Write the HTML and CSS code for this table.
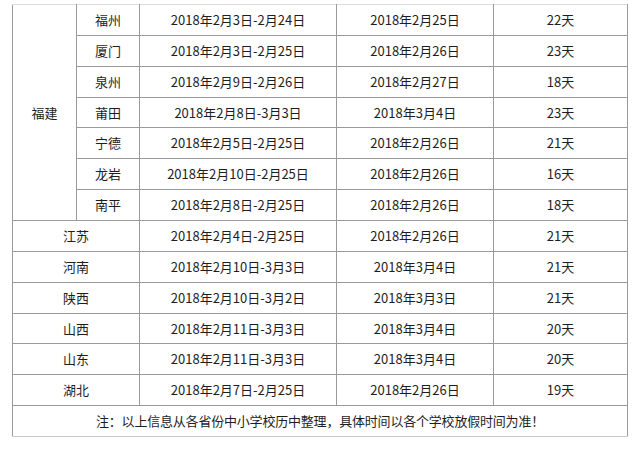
FILE: index.html
```html
<!DOCTYPE html>
<html lang="zh-CN">
<head>
<meta charset="utf-8">
<link rel="stylesheet" href="styles.css">
</head>
<body>
<table class="holiday">
  <colgroup>
    <col class="c-prov"><col class="c-city"><col class="c-range"><col class="c-end"><col class="c-days">
  </colgroup>
  <tbody>
    <tr><td rowspan="7">福建</td><td>福州</td><td>2018年2月3日-2月24日</td><td>2018年2月25日</td><td>22天</td></tr>
    <tr><td>厦门</td><td>2018年2月3日-2月25日</td><td>2018年2月26日</td><td>23天</td></tr>
    <tr><td>泉州</td><td>2018年2月9日-2月26日</td><td>2018年2月27日</td><td>18天</td></tr>
    <tr><td>莆田</td><td>2018年2月8日-3月3日</td><td>2018年3月4日</td><td>23天</td></tr>
    <tr><td>宁德</td><td>2018年2月5日-2月25日</td><td>2018年2月26日</td><td>21天</td></tr>
    <tr><td>龙岩</td><td>2018年2月10日-2月25日</td><td>2018年2月26日</td><td>16天</td></tr>
    <tr><td>南平</td><td>2018年2月8日-2月25日</td><td>2018年2月26日</td><td>18天</td></tr>
    <tr><td colspan="2">江苏</td><td>2018年2月4日-2月25日</td><td>2018年2月26日</td><td>21天</td></tr>
    <tr><td colspan="2">河南</td><td>2018年2月10日-3月3日</td><td>2018年3月4日</td><td>21天</td></tr>
    <tr><td colspan="2">陕西</td><td>2018年2月10日-3月2日</td><td>2018年3月3日</td><td>21天</td></tr>
    <tr><td colspan="2">山西</td><td>2018年2月11日-3月3日</td><td>2018年3月4日</td><td>20天</td></tr>
    <tr><td colspan="2">山东</td><td>2018年2月11日-3月3日</td><td>2018年3月4日</td><td>20天</td></tr>
    <tr><td colspan="2">湖北</td><td>2018年2月7日-2月25日</td><td>2018年2月26日</td><td>19天</td></tr>
    <tr class="note"><td colspan="5">注：以上信息从各省份中小学校历中整理，具体时间以各个学校放假时间为准！</td></tr>
  </tbody>
</table>
</body>
</html>
```
FILE: styles.css
```css
html, body {
  margin: 0;
  padding: 0;
  background: #fff;
}
body {
  padding: 4px 0 0 12px;
  font-family: "Noto Sans CJK SC", "Noto Sans", sans-serif;
  font-size: 13px;
  color: #1e1e1e;
}
.holiday {
  border-collapse: collapse;
  table-layout: fixed;
  width: 616px;
}
.c-prov { width: 64px; }
.c-city { width: 63px; }
.c-range { width: 197px; }
.c-end { width: 157px; }
.c-days { width: 134px; }
.holiday td {
  border: 1px solid #9a9a9a;
  height: 29.86px;
  padding: 0;
  text-align: center;
  vertical-align: middle;
  line-height: 16px;
  white-space: nowrap;
}
.holiday tr:first-child td {
  border-top-color: #dcdcdc;
}
.holiday .note td {
  border-bottom-color: #c8c8c8;
  letter-spacing: -0.2px;
}
```
